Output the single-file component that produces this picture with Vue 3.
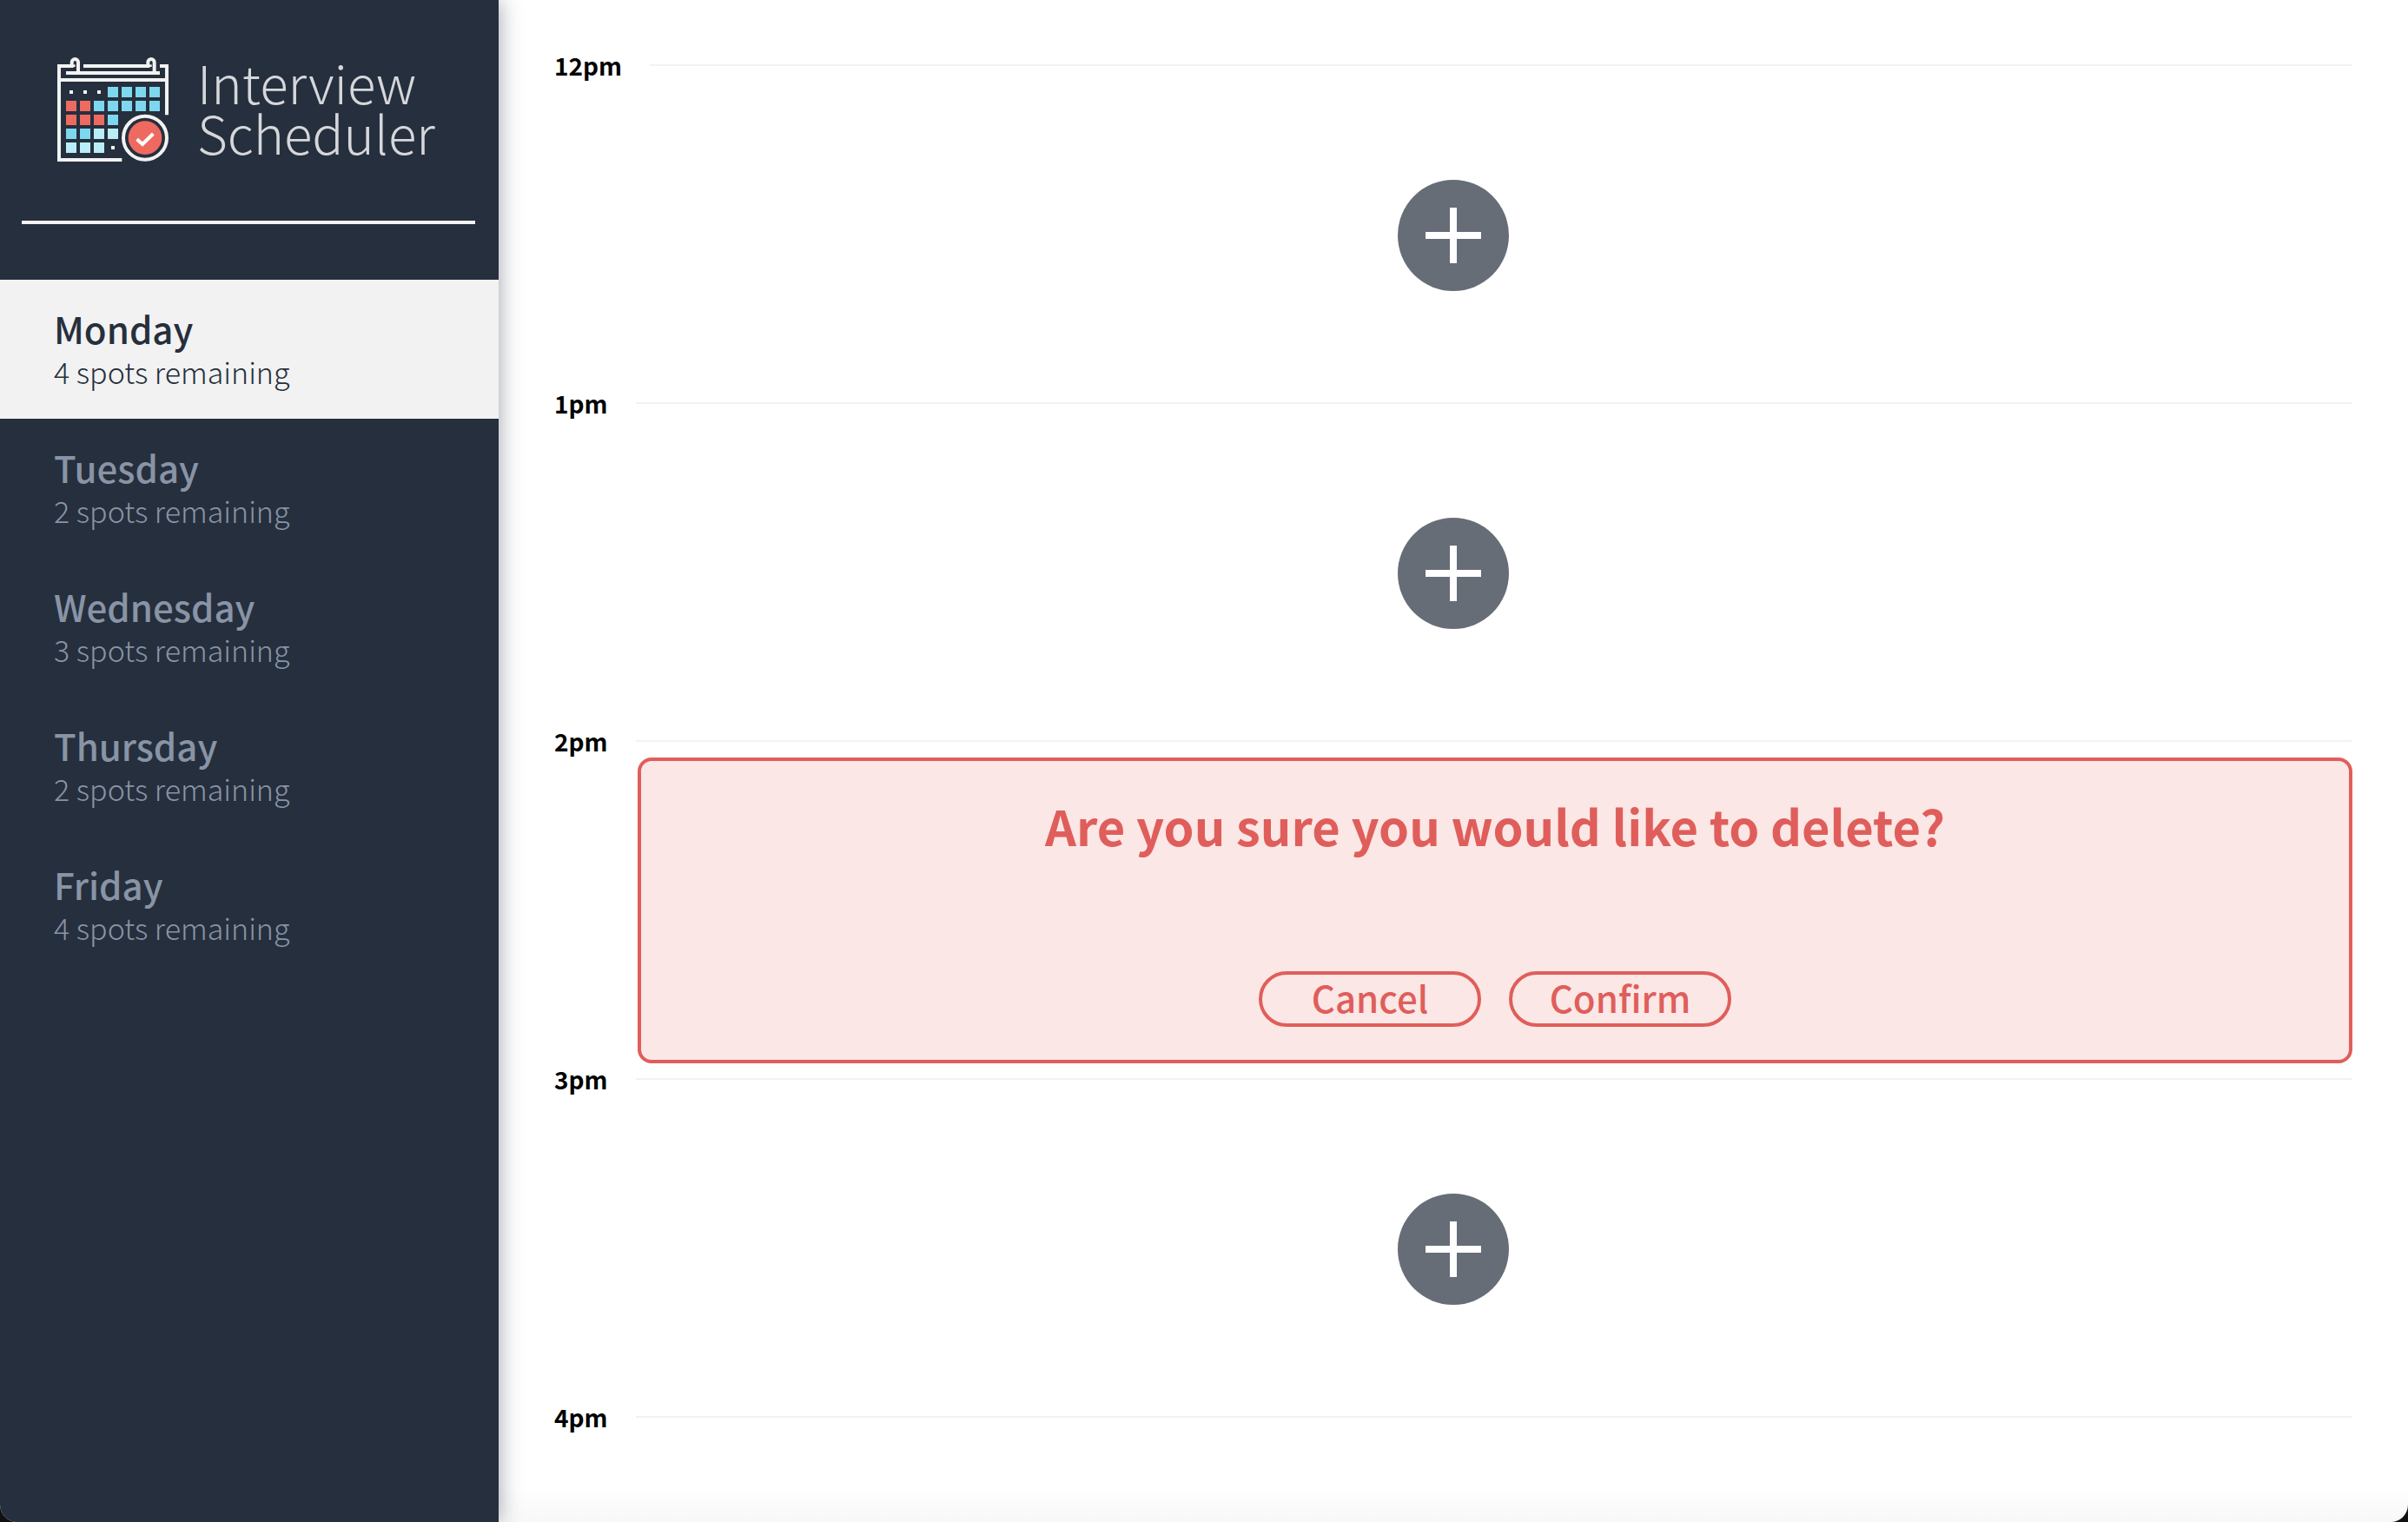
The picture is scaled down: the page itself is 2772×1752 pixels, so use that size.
<script setup>
import { ref } from 'vue'

const days = [
  { name: 'Monday', spots: 4 },
  { name: 'Tuesday', spots: 2 },
  { name: 'Wednesday', spots: 3 },
  { name: 'Thursday', spots: 2 },
  { name: 'Friday', spots: 4 },
]
const selected = ref('Monday')

const hours = [
  { time: '12pm', mode: 'empty' },
  { time: '1pm', mode: 'empty' },
  { time: '2pm', mode: 'confirm' },
  { time: '3pm', mode: 'empty' },
  { time: '4pm', mode: 'closed' },
]

// Calendar grid of the logo: b = blue, r = red, l = light blue, . = dot
const grid = ['...bbbb', 'rrbbbbb', 'rrrb', 'bbll', 'lll.']
const fills = { b: '#7dd8ef', r: '#ee6a61', l: '#b9eef8' }
const cells = grid.flatMap((row, y) =>
  [...row].map((kind, x) => ({
    id: `${x}-${y}`,
    dot: kind === '.',
    fill: fills[kind] ?? '#f2f2f2',
    x: 78 + x * 48,
    y: 135 + y * 48,
  })),
)
</script>

<template>
  <div class="layout">
    <aside class="sidebar">
      <div class="logo">
        <svg class="logo-icon" viewBox="45 30 390 366" aria-hidden="true">
          <g fill="none" stroke="#f2f2f2" stroke-width="12">
            <path d="M271 387H54V63H98V50a10 10 0 0 1 22 0V87" />
            <path d="M96 62h14" stroke-width="8" />
            <path d="M138 63H361V50a10 10 0 0 1 22 0V87" />
            <path d="M360 62h14" stroke-width="8" />
            <path d="M78 87H402M402 63H426V232M54 111H426" />
            <circle cx="351" cy="311" r="75" />
          </g>
          <template v-for="c in cells" :key="c.id">
            <rect v-if="c.dot" :x="c.x + 12" :y="c.y + 12" width="12" height="12" :fill="c.fill" />
            <rect v-else :x="c.x" :y="c.y" width="36" height="36" :fill="c.fill" />
          </template>
          <circle cx="351" cy="311" r="58" fill="#ee6a61" />
          <path d="M323 316L342 333L379 297" fill="none" stroke="#fff" stroke-width="12" />
        </svg>
        <span class="logo-text">Interview<br />Scheduler</span>
      </div>
      <hr class="separator" />
      <nav class="days">
        <button
          v-for="day in days"
          :key="day.name"
          type="button"
          class="day"
          :class="{ 'day-selected': day.name === selected }"
          @click="selected = day.name"
        >
          <span class="day-name">{{ day.name }}</span>
          <span class="day-spots">{{ day.spots }} spots remaining</span>
        </button>
      </nav>
    </aside>

    <main class="schedule">
      <article v-for="hour in hours" :key="hour.time" class="appointment">
        <header class="time">
          <h4 class="time-label">{{ hour.time }}</h4>
          <hr class="time-line" />
        </header>
        <div v-if="hour.mode === 'empty'" class="empty">
          <button type="button" class="add" aria-label="Add">
            <svg viewBox="0 0 128 128" aria-hidden="true">
              <circle cx="64" cy="64" r="64" fill="#666d77" />
              <path d="M64 32V96M32 64H96" stroke="#fff" stroke-width="8" />
            </svg>
          </button>
        </div>
        <section v-else-if="hour.mode === 'confirm'" class="card">
          <h1 class="card-title">Are you sure you would like to delete?</h1>
          <div class="card-actions">
            <button type="button" class="pill">Cancel</button>
            <button type="button" class="pill">Confirm</button>
          </div>
        </section>
      </article>
    </main>
  </div>
</template>

<style>
body {
  margin: 0;
  background: #111;
}
</style>

<style scoped>
.layout {
  display: flex;
  box-sizing: border-box;
  min-height: 100vh;
  overflow: hidden;
  border-radius: 0 0 20px 20px;
  background: linear-gradient(to top, #f8f8f8, #fff 40px);
  font-family: 'Noto Sans CJK SC', 'Noto Sans', sans-serif;
}

.layout * {
  box-sizing: border-box;
}

.sidebar {
  flex: none;
  width: 574px;
  background: #262f3d;
  box-shadow: 0 0 24px rgba(38, 47, 61, 0.45);
}

.logo {
  display: flex;
  align-items: flex-start;
  gap: 32px;
  padding: 65px 0 0 65px;
}

.logo-icon {
  flex: none;
  width: 130px;
  height: 122px;
}

.logo-text {
  color: #d5d7da;
  font-size: 60px;
  font-weight: 300;
  line-height: 58px;
}

.separator {
  height: 4px;
  margin: 67px 27px 64px 25px;
  border: 0;
  background: #f2f2f2;
}

.days {
  display: flex;
  flex-direction: column;
}

.day {
  display: flex;
  flex-direction: column;
  justify-content: center;
  height: 160px;
  padding: 0 62px 4px;
  border: 0;
  background: none;
  color: #8894a6;
  font-family: inherit;
  text-align: left;
  cursor: pointer;
}

.day-name {
  font-size: 42px;
  font-weight: 500;
  line-height: 56px;
}

.day-spots {
  font-size: 34px;
  font-weight: 300;
  line-height: 44px;
}

.day-selected {
  background: #f2f2f2;
  color: #262f3d;
}

.schedule {
  flex: 1;
  min-width: 0;
  padding: 57px 64px 0;
}

.appointment {
  min-height: 389px;
}

.appointment:last-child {
  min-height: 0;
}

.time {
  display: flex;
  align-items: center;
  gap: 32px;
  height: 36px;
}

.time-label {
  margin: 0;
  color: #000;
  font-size: 28px;
  font-weight: 700;
  line-height: 36px;
}

.time-line {
  flex: 1;
  height: 2px;
  margin: 0;
  border: 0;
  background: #f2f2f2;
}

.empty {
  display: flex;
  justify-content: center;
  padding-top: 114px;
}

.add {
  width: 128px;
  height: 128px;
  padding: 0;
  border: 0;
  border-radius: 50%;
  background: none;
  cursor: pointer;
}

.add svg {
  display: block;
}

.card {
  display: flex;
  flex-direction: column;
  align-items: center;
  justify-content: space-between;
  height: 352px;
  margin: 1px 0 0 96px;
  padding: 38px 0;
  border: 4px solid #df5e5b;
  border-radius: 16px;
  background: #fbe7e5;
}

.card-title {
  margin: 0;
  color: #df5e5b;
  font-size: 56px;
  font-weight: 700;
  line-height: 72px;
}

.card-actions {
  display: flex;
  gap: 32px;
}

.pill {
  width: 256px;
  height: 64px;
  padding: 0 0 4px;
  border: 4px solid #df5e5b;
  border-radius: 32px;
  background: none;
  color: #df5e5b;
  font-family: inherit;
  font-size: 42px;
  font-weight: 500;
  line-height: 52px;
  cursor: pointer;
}
</style>
